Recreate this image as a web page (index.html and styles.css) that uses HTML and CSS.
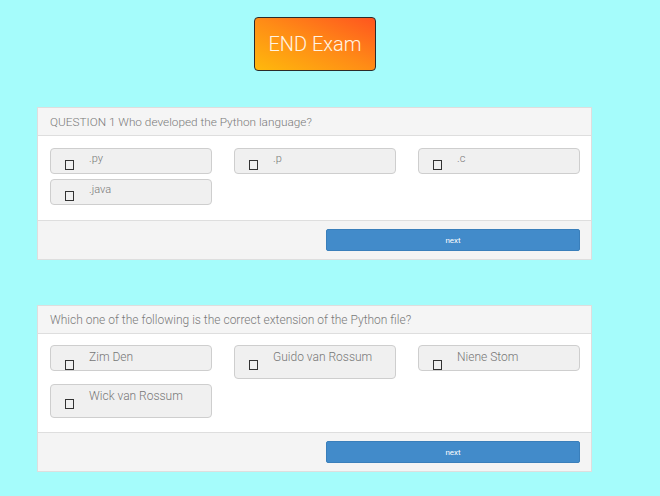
FILE: index.html
```html
<!DOCTYPE html>
<html>
<head>
<meta charset="utf-8">
<link rel="stylesheet" href="styles.css">
</head>
<body>
<div class="page">
  <div class="top">
    <button class="end-btn">END Exam</button>
  </div>

  <div class="panel">
    <div class="panel-head">QUESTION 1 Who developed the Python language?</div>
    <div class="panel-body">
      <div class="opt"><span class="chk"></span><span class="txt">.py</span></div>
      <div class="opt"><span class="chk"></span><span class="txt">.p</span></div>
      <div class="opt"><span class="chk"></span><span class="txt">.c</span></div>
      <div class="opt"><span class="chk"></span><span class="txt">.java</span></div>
    </div>
    <div class="panel-foot"><button class="next">next</button></div>
  </div>

  <div class="panel panel-2">
    <div class="panel-head head-2">Which one of the following is the correct extension of the Python file?</div>
    <div class="panel-body body-2">
      <div class="opt opt-2"><span class="chk"></span><span class="txt">Zim Den</span></div>
      <div class="opt opt-2 tall"><span class="chk"></span><span class="txt">Guido van Rossum</span></div>
      <div class="opt opt-2"><span class="chk"></span><span class="txt">Niene Stom</span></div>
      <div class="opt opt-2 tall"><span class="chk"></span><span class="txt">Wick van Rossum</span></div>
    </div>
    <div class="panel-foot"><button class="next">next</button></div>
  </div>
</div>
</body>
</html>
```
FILE: styles.css
```css
html, body {
  margin: 0;
  padding: 0;
  background: #a5fcfb;
  font-family: Roboto, "Liberation Sans", sans-serif;
  font-weight: 300;
}

.page {
  padding: 17px 69px 0 37px;
  width: 555px;
}

.top {
  padding-left: 217px;
  height: 90px;
}

.end-btn {
  display: block;
  width: 122px;
  height: 54px;
  border: 1px solid #2b2b2b;
  border-radius: 4px;
  background: linear-gradient(to top right, #ffb90c 0%, #ff8c16 50%, #ff551f 100%);
  color: #fff4e4;
  font-family: Roboto, "Liberation Sans", sans-serif;
  font-weight: 300;
  font-size: 20px;
  padding: 0;
}

.panel {
  background: #fff;
  border: 1px solid #dedede;
  box-sizing: border-box;
  width: 555px;
}

.panel-2 {
  margin-top: 45px;
}

.panel-head {
  height: 28px;
  box-sizing: border-box;
  background: #f5f5f5;
  border-bottom: 1px solid #dedede;
  padding: 8px 12px 0;
  font-size: 11.8px;
  color: #7a7a7a;
  line-height: 13px;
}

.head-2 {
  font-size: 12px;
}

.panel-body {
  display: grid;
  grid-template-columns: 162px 162px 162px;
  column-gap: 22px;
  row-gap: 5px;
  padding: 12px 12px 15px;
}

.body-2 {
  padding-top: 11px;
  padding-bottom: 14px;
}

.opt {
  display: flex;
  align-items: flex-start;
  height: 26px;
  box-sizing: border-box;
  border: 1px solid #cecece;
  border-radius: 4px;
  background: #f0f0f0;
  padding-left: 14px;
  color: #777;
}

.chk {
  flex: none;
  width: 9px;
  height: 10px;
  box-sizing: border-box;
  border: 1px solid #333;
  margin-top: 11px;
}

.txt {
  margin-left: 15px;
  margin-top: 3px;
  font-size: 11px;
  line-height: 13px;
}

.opt-2 {
  height: 26px;
}

.opt-2 .chk {
  margin-top: 14px;
}

.opt-2 .txt {
  font-size: 12px;
  line-height: 14px;
  margin-top: 4px;
}

.opt-2.tall {
  height: 34px;
}

.panel-foot {
  display: flex;
  justify-content: flex-end;
  background: #f4f4f4;
  border-top: 1px solid #dedede;
  padding: 8px 11px 8px;
}

.next {
  width: 254px;
  height: 22px;
  background: #428bca;
  border: 1px solid #3a7fbb;
  border-radius: 2px;
  color: #fff;
  font-family: Roboto, "Liberation Sans", sans-serif;
  font-weight: 400;
  font-size: 8px;
  padding: 0;
}
```
